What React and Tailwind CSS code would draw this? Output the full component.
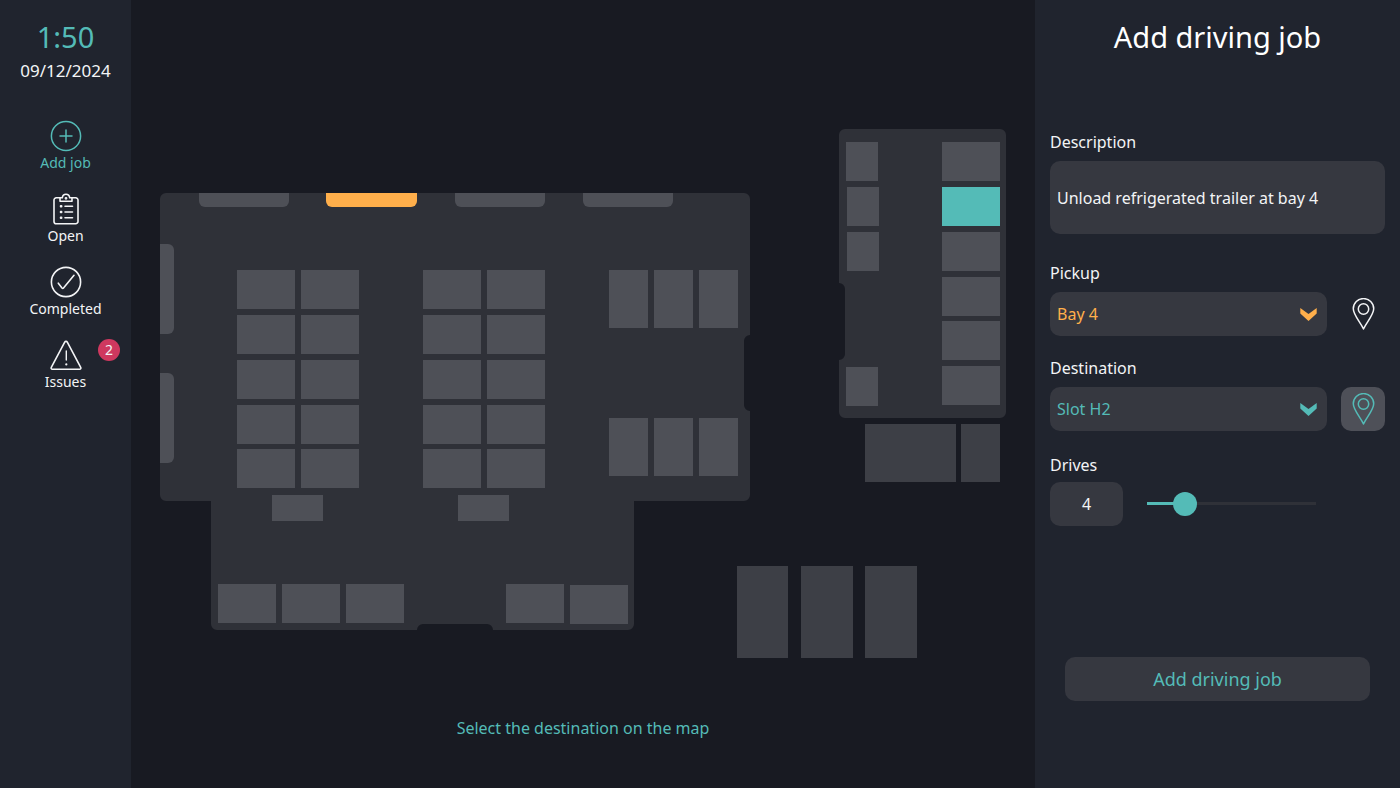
import { useState } from 'react';

const NAV = [
  { id: 'add', label: 'Add job', Icon: AddIcon },
  { id: 'open', label: 'Open', Icon: ClipboardIcon },
  { id: 'completed', label: 'Completed', Icon: CheckIcon },
  { id: 'issues', label: 'Issues', Icon: WarningIcon, count: 2 },
];

const ROWS = [141, 186, 231, 276, 320];

// [x, y, width, height] in map units
const SLOTS = [
  ...[106, 170, 292, 356].flatMap((x) => ROWS.map((y) => [x, y, 58, 39])),
  ...[478, 523, 568].flatMap((x) => [[x, 141, 39, 58], [x, 289, 39, 58]]),
  [141, 366, 51, 26],
  [327, 366, 51, 26],
  [87, 455, 58, 39],
  [151, 455, 58, 39],
  [215, 455, 58, 39],
  [375, 455, 58, 39],
  [439, 456, 58, 39],
  [715, 13, 32, 39],
  [716, 58, 32, 39],
  [716, 103, 32, 39],
  [715, 238, 32, 39],
  [811, 13, 58, 39],
  [811, 103, 58, 39],
  [811, 148, 58, 39],
  [811, 192, 58, 39],
  [811, 237, 58, 39],
];

const YARD = [
  [734, 295, 91, 58],
  [830, 295, 39, 58],
  [606, 437, 51, 92],
  [670, 437, 52, 92],
  [734, 437, 52, 92],
];

const TOP_BAYS = [68, 324, 452];

function AddIcon() {
  return (
    <svg className="size-8" viewBox="0 0 32 32" fill="none" stroke="currentColor" strokeWidth="1.5" strokeLinecap="round">
      <circle cx="16" cy="16" r="14.6" />
      <path d="M16 10v12M10 16h12" />
    </svg>
  );
}

function ClipboardIcon() {
  return (
    <svg className="size-8" viewBox="0 0 32 32" fill="none" stroke="currentColor" strokeWidth="1.6" strokeLinejoin="round" strokeLinecap="round">
      <path d="M10 4.8H6.3A2.3 2.3 0 0 0 4 7.1V28.4A2.3 2.3 0 0 0 6.3 30.7H25.7A2.3 2.3 0 0 0 28 28.4V7.1A2.3 2.3 0 0 0 25.7 4.8H22" />
      <path d="M10 8.3V4.8H12.3C12.6 2.7 14 1.3 16 1.3S19.4 2.7 19.7 4.8H22V8.3Z" />
      <circle cx="16" cy="5.3" r="0.6" fill="currentColor" />
      <path d="M15 13.3h7.5M15 19h7.5M15 24.7h7.5" />
      <path d="M10.9 13.3h.4M10.9 19h.4M10.9 24.7h.4" strokeWidth="2.4" />
    </svg>
  );
}

function CheckIcon() {
  return (
    <svg className="size-8" viewBox="0 0 32 32" fill="none" stroke="currentColor" strokeWidth="1.6" strokeLinejoin="round" strokeLinecap="round">
      <circle cx="16" cy="16" r="14.6" />
      <path d="M8.3 17.2l3.7 4.9c.5.6 1 .6 1.5 0L24 9.3" />
    </svg>
  );
}

function WarningIcon() {
  return (
    <svg className="size-8" viewBox="0 0 32 32" fill="none" stroke="currentColor" strokeWidth="1.6" strokeLinejoin="round" strokeLinecap="round">
      <path d="M14.7 3.2 1.3 28.3c-.5 1 0 1.9 1.1 1.9h27.2c1.1 0 1.6-.9 1.1-1.9L17.3 3.2c-.6-1.1-2-1.1-2.6 0Z" />
      <path d="M16.3 12v9" strokeWidth="1.4" />
      <path d="M16.3 25.3v.2" strokeWidth="2.2" />
    </svg>
  );
}

function PinIcon() {
  return (
    <svg className="h-8 w-6" viewBox="0 0 24 32" fill="none" stroke="currentColor" strokeWidth="1.5" strokeLinejoin="round">
      <path d="M12.5 31C9.5 24.5 2.3 16.8 2.3 10.8a10.2 10.2 0 0 1 20.4 0C22.7 16.8 15.5 24.5 12.5 31Z" />
      <circle cx="12.5" cy="11" r="5.2" />
    </svg>
  );
}

function Chevron() {
  return (
    <svg className="pointer-events-none absolute right-[10px] top-4 h-[13px] w-[17px]" viewBox="0 0 17 13" fill="currentColor">
      <path d="M0.3 0 8.5 6 16.7 0V5.6L8.5 13 0.3 5.6Z" />
    </svg>
  );
}

function Sidebar() {
  return (
    <aside className="w-[131px] shrink-0 bg-[#20242e] pt-4 text-center">
      <p className="text-[29px] leading-[42px] text-[#54bbb7]">1:50</p>
      <p className="mt-[1px] text-[17px] leading-6">09/12/2024</p>
      <nav className="mt-[37px] flex flex-col gap-5">
        {NAV.map(({ id, label, Icon, count }) => (
          <button
            key={id}
            type="button"
            className={`relative flex flex-col items-center gap-[1px] ${id === 'add' ? 'text-[#54bbb7]' : 'text-gray-100'}`}
          >
            <Icon />
            <span className="text-sm leading-5">{label}</span>
            {count && (
              <span className="absolute right-[11px] top-0 flex size-[22px] items-center justify-center rounded-full bg-[#cf385f] text-sm">
                {count}
              </span>
            )}
          </button>
        ))}
      </nav>
    </aside>
  );
}

function SiteMap() {
  return (
    <svg className="w-full" viewBox="0 0 904 530" role="img" aria-label="Site map">
      {/* main hall with its two gates */}
      <path
        fill="#2f3138"
        d="M35 64H613a6 6 0 0 1 6 6V206a6 6 0 0 0-6 6V276a6 6 0 0 0 6 6V366a6 6 0 0 1-6 6H503V495a6 6 0 0 1-6 6H362a6 6 0 0 0-6-6H292a6 6 0 0 0-6 6H86a6 6 0 0 1-6-6V372H35a6 6 0 0 1-6-6V70a6 6 0 0 1 6-6Z"
      />
      {/* cold store */}
      <path
        fill="#2f3138"
        d="M714 0H869a6 6 0 0 1 6 6V283a6 6 0 0 1-6 6H714a6 6 0 0 1-6-6V231a6 6 0 0 0 6-6V160a6 6 0 0 0-6-6V6a6 6 0 0 1 6-6Z"
      />
      {TOP_BAYS.map((x) => (
        <path key={x} fill="#4e5057" d={`M${x} 64h90v8a6 6 0 0 1-6 6h-78a6 6 0 0 1-6-6Z`} />
      ))}
      <path fill="#ffaf4b" d="M195 64h91v8a6 6 0 0 1-6 6h-79a6 6 0 0 1-6-6Z" />
      {[115, 244].map((y) => (
        <path key={y} fill="#4e5057" d={`M29 ${y}h8a6 6 0 0 1 6 6v78a6 6 0 0 1-6 6h-8Z`} />
      ))}
      {SLOTS.map(([x, y, w, h]) => (
        <rect key={`${x}-${y}`} x={x} y={y} width={w} height={h} fill="#4e5057" />
      ))}
      <rect x="811" y="58" width="58" height="39" fill="#54bbb7" />
      {YARD.map(([x, y, w, h]) => (
        <rect key={`${x}-${y}`} x={x} y={y} width={w} height={h} fill="#3d3f46" />
      ))}
    </svg>
  );
}

function PlaceField({ id, label, tone, options, active }) {
  return (
    <div className="mt-5">
      <label htmlFor={id} className="block leading-6">{label}</label>
      <div className="mt-[7px] flex gap-[14px]">
        <div className={`relative flex-1 ${tone}`}>
          <select id={id} className="h-11 w-full appearance-none rounded-[10px] bg-[#363840] px-[7px]">
            {options.map((o) => <option key={o}>{o}</option>)}
          </select>
          <Chevron />
        </div>
        <button
          type="button"
          aria-label={`Pick ${label.toLowerCase()} on map`}
          className={`flex size-11 items-center justify-center rounded-[10px] ${active ? 'bg-[#4e5058] text-[#54bbb7]' : 'text-gray-100'}`}
        >
          <PinIcon />
        </button>
      </div>
    </div>
  );
}

function JobForm() {
  const [drives, setDrives] = useState(4);
  const min = 1;
  const max = 18;
  const filled = ((drives - min) / (max - min)) * 100;

  return (
    <form className="w-[365px] shrink-0 bg-[#20242e] px-[15px] pt-4" onSubmit={(e) => e.preventDefault()}>
      <h1 className="text-center text-[29px] leading-[42px] text-white">Add driving job</h1>

      <label htmlFor="description" className="mt-[72px] block leading-6">Description</label>
      <input
        id="description"
        type="text"
        defaultValue="Unload refrigerated trailer at bay 4"
        className="mt-[7px] mb-[27px] block h-[73px] w-full rounded-[10px] bg-[#363840] px-[7px]"
      />

      <PlaceField id="pickup" label="Pickup" tone="text-[#ffaf4b]" options={['Bay 4', 'Bay 1', 'Bay 2', 'Bay 3']} />
      <PlaceField id="destination" label="Destination" tone="text-[#54bbb7]" options={['Slot H2', 'Slot H1', 'Slot H3']} active />

      <label htmlFor="drives" className="mt-[22px] block leading-6">Drives</label>
      <div className="mt-[5px] flex items-center gap-6">
        <output htmlFor="drives" className="flex h-11 w-[73px] items-center justify-center rounded-[10px] bg-[#363840]">
          {drives}
        </output>
        <div className="relative h-6 w-[169px]">
          <div className="absolute inset-x-0 top-[10px] h-[3px] bg-[#2f3138]">
            <div className="h-full bg-[#54bbb7]" style={{ width: `${filled}%` }} />
          </div>
          <input
            id="drives"
            type="range"
            min={min}
            max={max}
            value={drives}
            onChange={(e) => setDrives(Number(e.target.value))}
            className="absolute inset-0 h-6 w-full appearance-none bg-transparent [&::-webkit-slider-thumb]:size-6 [&::-webkit-slider-thumb]:appearance-none [&::-webkit-slider-thumb]:rounded-full [&::-webkit-slider-thumb]:bg-[#54bbb7]"
          />
        </div>
      </div>

      <div className="mt-[131px] px-[15px]">
        <button type="submit" className="h-11 w-full rounded-[10px] bg-[#363840] text-lg text-[#54bbb7]">
          Add driving job
        </button>
      </div>
    </form>
  );
}

export default function App() {
  return (
    <div className="flex min-h-screen bg-[#181a22] font-['Noto_Sans','Open_Sans',sans-serif] text-base text-gray-100">
      <Sidebar />
      <main className="min-w-0 flex-1 pt-[129px]">
        <SiteMap />
        <p className="mt-[57px] text-center leading-6 text-[#54bbb7]">Select the destination on the map</p>
      </main>
      <JobForm />
    </div>
  );
}
